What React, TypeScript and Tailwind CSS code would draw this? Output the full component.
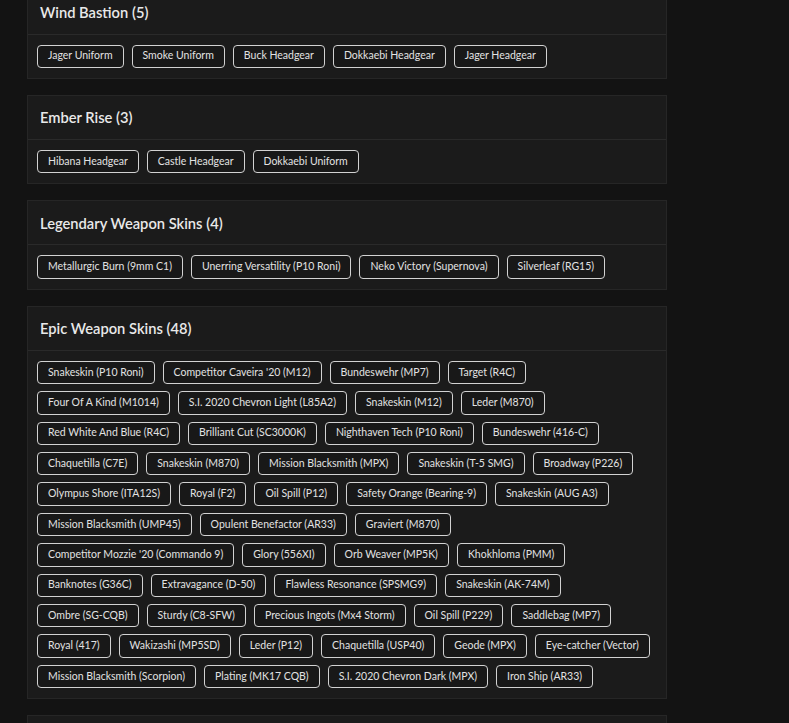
import React from "react"

type Section = { title: string; rows: string[][] }

const sections: Section[] = [
  {
    title: "Wind Bastion",
    rows: [["Jager Uniform", "Smoke Uniform", "Buck Headgear", "Dokkaebi Headgear", "Jager Headgear"]],
  },
  {
    title: "Ember Rise",
    rows: [["Hibana Headgear", "Castle Headgear", "Dokkaebi Uniform"]],
  },
  {
    title: "Legendary Weapon Skins",
    rows: [["Metallurgic Burn (9mm C1)", "Unerring Versatility (P10 Roni)", "Neko Victory (Supernova)", "Silverleaf (RG15)"]],
  },
  {
    title: "Epic Weapon Skins",
    rows: [
      ["Snakeskin (P10 Roni)", "Competitor Caveira '20 (M12)", "Bundeswehr (MP7)", "Target (R4C)"],
      ["Four Of A Kind (M1014)", "S.I. 2020 Chevron Light (L85A2)", "Snakeskin (M12)", "Leder (M870)"],
      ["Red White And Blue (R4C)", "Brilliant Cut (SC3000K)", "Nighthaven Tech (P10 Roni)", "Bundeswehr (416-C)"],
      ["Chaquetilla (C7E)", "Snakeskin (M870)", "Mission Blacksmith (MPX)", "Snakeskin (T-5 SMG)", "Broadway (P226)"],
      ["Olympus Shore (ITA12S)", "Royal (F2)", "Oil Spill (P12)", "Safety Orange (Bearing-9)", "Snakeskin (AUG A3)"],
      ["Mission Blacksmith (UMP45)", "Opulent Benefactor (AR33)", "Graviert (M870)"],
      ["Competitor Mozzie '20 (Commando 9)", "Glory (556XI)", "Orb Weaver (MP5K)", "Khokhloma (PMM)"],
      ["Banknotes (G36C)", "Extravagance (D-50)", "Flawless Resonance (SPSMG9)", "Snakeskin (AK-74M)"],
      ["Ombre (SG-CQB)", "Sturdy (C8-SFW)", "Precious Ingots (Mx4 Storm)", "Oil Spill (P229)", "Saddlebag (MP7)"],
      ["Royal (417)", "Wakizashi (MP5SD)", "Leder (P12)", "Chaquetilla (USP40)", "Geode (MPX)", "Eye-catcher (Vector)"],
      ["Mission Blacksmith (Scorpion)", "Plating (MK17 CQB)", "S.I. 2020 Chevron Dark (MPX)", "Iron Ship (AR33)"],
    ],
  },
  {
    title: "Rare Weapon Skins",
    rows: [["Snakeskin (M590A1)", "Bundeswehr (P90)", "Leder (AK-12)"]],
  },
]

function SkinCard({ section }: { section: Section }) {
  const count = section.rows.reduce((n, r) => n + r.length, 0)
  return (
    <div className="mb-4 border border-[#262626] bg-[#1b1b1b]">
      {/* Header */}
      <div className="flex h-[44px] items-center border-b border-[#2a2a2a] px-3">
        <h2 className="text-[14.7px] font-semibold text-[#e9e9e9]">
          {section.title} ({count})
        </h2>
      </div>

      {/* Chips */}
      <div className="flex flex-col gap-y-[7px] py-[10px] pl-[9px]">
        {section.rows.map((row, i) => (
          <div key={i} className="flex gap-x-2">
            {row.map((item) => (
              <span
                key={item}
                className="flex h-[23.4px] items-center whitespace-nowrap rounded-[4px] border border-[#d2d2d2] bg-[#181818] px-[10px] text-[10.5px] text-[#e2e2e2]"
              >
                {item}
              </span>
            ))}
          </div>
        ))}
      </div>
    </div>
  )
}

export default function App() {
  return (
    <div className="min-h-screen overflow-hidden bg-[#131313] font-['Lato',sans-serif]">
      <div className="-mt-[10.4px] ml-[27px] w-[640px]">
        {sections.map((s) => (
          <SkinCard key={s.title} section={s} />
        ))}
      </div>
    </div>
  )
}
